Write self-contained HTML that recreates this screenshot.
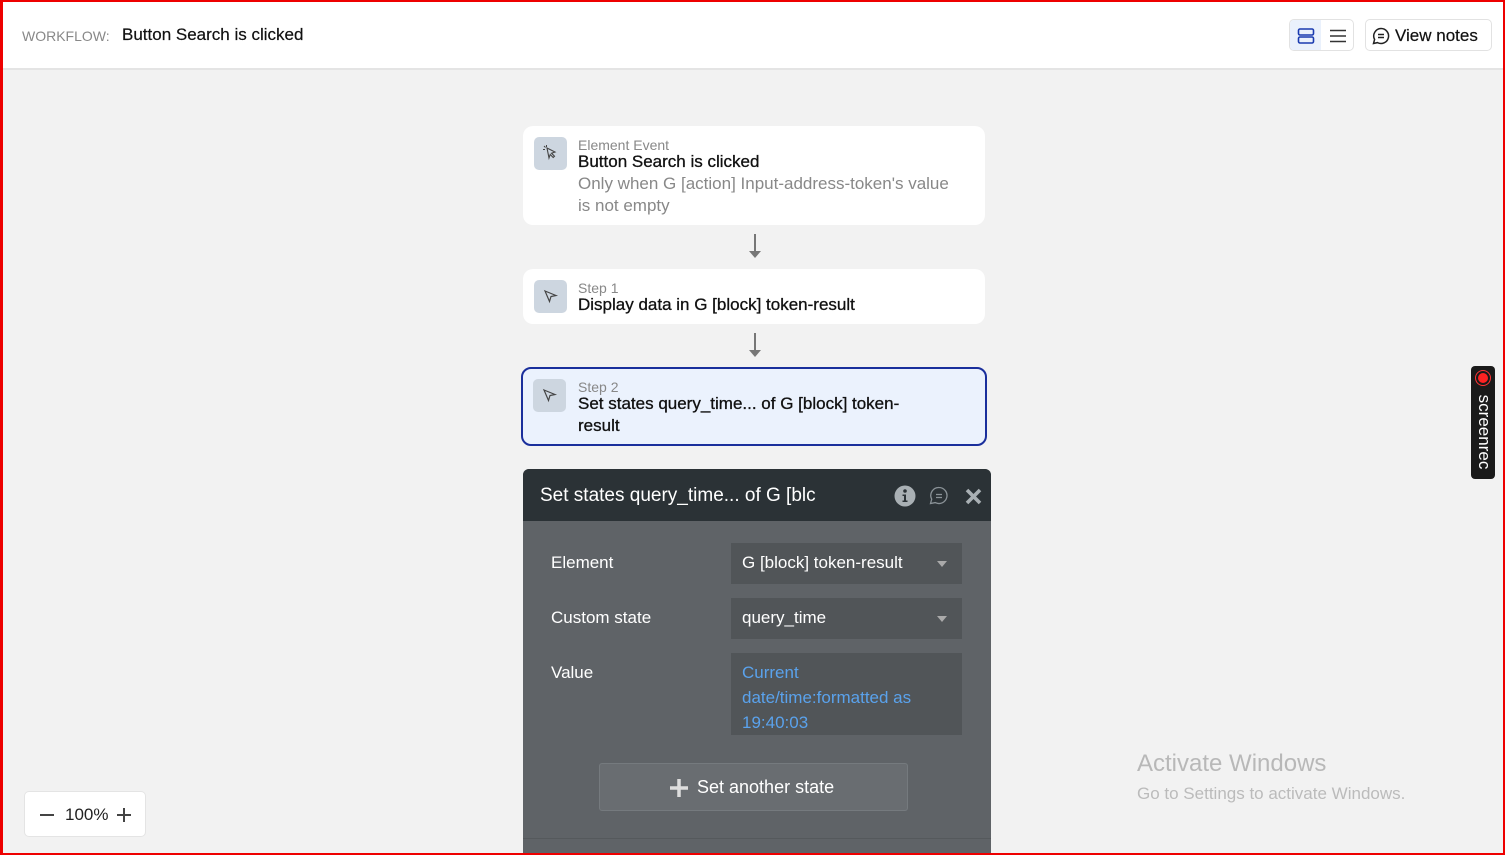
<!DOCTYPE html>
<html><head><meta charset="utf-8"><style>
*{box-sizing:border-box;margin:0;padding:0}
html,body{width:1505px;height:855px;overflow:hidden}
body{background:#f2f2f2;font-family:"Liberation Sans",sans-serif;position:relative}
.frame{position:absolute;left:0;top:0;width:1505px;height:855px;border:2px solid #e00;border-left-width:3px;pointer-events:none;z-index:10}
.hdr{position:absolute;left:0;top:0;width:1505px;height:70px;background:#fff;border-bottom:2px solid #e4e4e4}
.abs{position:absolute}
.card{position:absolute;left:523px;width:462px;background:#fff;border-radius:10px}
.ic{position:absolute;left:11px;top:11px;width:33px;height:33px;background:#cdd6e0;border-radius:5px}
.lbl{position:absolute;left:55px;font-size:14px;color:#888}
.ttl{position:absolute;left:55px;font-size:17px;color:#111;line-height:22px;-webkit-text-stroke:0.3px #111}
.arrow{position:absolute;left:754px;width:2px;background:#777}
.panel{position:absolute;left:523px;top:469px;width:468px;height:386px;background:#5f6367;border-radius:6px 6px 0 0;overflow:hidden}
.ph{height:52px;background:#2b3236;color:#fff;font-size:19px;padding:16px 0 0 17px}
.row{position:absolute;left:28px;color:#fff;font-size:17px}
.sel{position:absolute;left:208px;width:231px;height:41px;background:#515558;color:#fff;font-size:17px;padding:10px 0 0 11px}
.tri{position:absolute;right:15px;top:18px;border:5px solid transparent;border-top:6px solid #aaa;border-bottom:0}
</style></head><body>
<div class="hdr">
 <div class="abs" style="left:22px;top:28px;font-size:14px;color:#888">WORKFLOW:</div>
 <div class="abs" style="left:122px;top:25px;font-size:17px;color:#111;-webkit-text-stroke:0.2px #111">Button Search is clicked</div>
 <div class="abs" style="left:1289px;top:19px;width:65px;height:32px;border:1px solid #e2e2e2;border-radius:5px;overflow:hidden">
  <div class="abs" style="left:0;top:0;width:31px;height:32px;background:#eaf1fc"></div>
  <svg class="abs" style="left:7px;top:8px" width="18" height="16"><rect x="1.5" y="1" width="15" height="6" rx="1.5" fill="none" stroke="#1a3bb0" stroke-width="1.6"/><rect x="1.5" y="9" width="15" height="6" rx="1.5" fill="none" stroke="#1a3bb0" stroke-width="1.6"/></svg>
  <svg class="abs" style="left:39px;top:9px" width="18" height="14"><path d="M1 1.5H17M1 7H17M1 12.5H17" stroke="#333" stroke-width="1.6"/></svg>
 </div>
 <div class="abs" style="left:1365px;top:19px;width:127px;height:32px;border:1px solid #e2e2e2;border-radius:5px">
  <svg class="abs" style="left:6px;top:7px" width="18" height="18"><path d="M9 1.5a7.5 7.5 0 1 1-3.5 14.1L1.5 16.5 2.6 12.5A7.5 7.5 0 0 1 9 1.5z" fill="none" stroke="#222" stroke-width="1.5"/><path d="M6 7.5h6M6 10.5h6" stroke="#222" stroke-width="1.4"/></svg>
  <div class="abs" style="left:29px;top:6px;font-size:17px;color:#111;-webkit-text-stroke:0.2px #111">View notes</div>
 </div>
</div>

<div class="card" style="top:126px;height:99px">
 <div class="ic"><svg width="33" height="33"><path d="M13 11l8 4-3.5 1.2 3 3-1.3 1.3-3-3L15 21z" fill="none" stroke="#444" stroke-width="1.1"/><path d="M10 9l1.5 1.5M9 12.5h2M12.5 8v2" stroke="#444" stroke-width="1"/></svg></div>
 <div class="lbl" style="top:11px">Element Event</div>
 <div class="ttl" style="top:25px">Button Search is clicked</div>
 <div class="ttl" style="top:47px;color:#888;width:385px;-webkit-text-stroke:0">Only when G [action] Input-address-token's value is not empty</div>
</div>
<div class="arrow" style="top:234px;height:22px"></div>
<svg class="abs" style="left:748px;top:250px" width="14" height="10"><path d="M1 1l6 7 6-7z" fill="#777"/></svg>

<div class="card" style="top:269px;height:55px">
 <div class="ic"><svg width="33" height="33"><path d="M11 11l11 4.5-5 1-1.5 5z" fill="none" stroke="#444" stroke-width="1.2"/></svg></div>
 <div class="lbl" style="top:11px">Step 1</div>
 <div class="ttl" style="top:25px">Display data in G [block] token-result</div>
</div>
<div class="arrow" style="top:333px;height:22px"></div>
<svg class="abs" style="left:748px;top:349px" width="14" height="10"><path d="M1 1l6 7 6-7z" fill="#777"/></svg>

<div class="card" style="top:367px;height:79px;left:521px;width:466px;background:#ebf2fd;border:2px solid #1a2f9c">
 <div class="ic" style="left:10px;top:10px"><svg width="33" height="33"><path d="M11 11l11 4.5-5 1-1.5 5z" fill="none" stroke="#444" stroke-width="1.2"/></svg></div>
 <div class="lbl" style="top:10px;left:55px">Step 2</div>
 <div class="ttl" style="top:24px;left:55px;width:360px">Set states query_time... of G [block] token-result</div>
</div>

<div class="panel">
 <div class="ph">Set states query_time... of G [blc</div>
 <svg class="abs" style="left:371px;top:16px" width="22" height="22"><circle cx="11" cy="11" r="10.5" fill="#a9b0b4"/><circle cx="11" cy="6" r="1.8" fill="#2b3236"/><path d="M8.5 9.5h3.5v6h1.5v1.5h-5v-1.5h1.5v-4.5h-1.5z" fill="#2b3236"/></svg>
 <svg class="abs" style="left:406px;top:17px" width="20" height="20"><path d="M10 1.5a8 8 0 1 1-3.7 15.1L1.5 17.5 2.7 13.2A8 8 0 0 1 10 1.5z" fill="none" stroke="#8a9297" stroke-width="1.3"/><path d="M7 8.5h6M7 11.5h6" stroke="#8a9297" stroke-width="1.3"/></svg>
 <svg class="abs" style="left:442px;top:19px" width="17" height="17"><path d="M2 2L15 15M15 2L2 15" stroke="#a9b0b4" stroke-width="3.6"/></svg>
 <div class="row" style="top:84px">Element</div>
 <div class="sel" style="top:74px">G [block] token-result<div class="tri"></div></div>
 <div class="row" style="top:139px">Custom state</div>
 <div class="sel" style="top:129px">query_time<div class="tri"></div></div>
 <div class="row" style="top:194px">Value</div>
 <div class="sel" style="top:184px;height:82px;color:#5aa2ec;line-height:25px;padding-top:7px;width:231px">Current<br>date/time:formatted as<br>19:40:03</div>
 <div class="abs" style="left:76px;top:294px;width:309px;height:48px;background:#696d71;border:1px solid #757a7e;border-radius:3px;color:#fff;font-size:18px">
  <svg class="abs" style="left:69px;top:14px" width="20" height="20"><path d="M10 1v18M1 10h18" stroke="#ddd" stroke-width="3.5"/></svg>
  <div class="abs" style="left:97px;top:13px">Set another state</div>
 </div>
 <div class="abs" style="left:0;top:369px;width:468px;height:1px;background:#55595c"></div>
</div>

<div class="abs" style="left:1471px;top:366px;width:24px;height:113px;background:#1a1a1a;border-radius:4px">
 <div class="abs" style="left:4px;top:4px;width:16px;height:16px;border-radius:50%;border:1.5px solid #f33"></div>
 <div class="abs" style="left:7px;top:7px;width:10px;height:10px;border-radius:50%;background:#f22"></div>
 <div class="abs" style="left:1px;top:22px;width:88px;height:22px;transform-origin:0 0;transform:translate(23px,0) rotate(90deg);color:#fff;font-size:17px;line-height:22px;text-align:center">screenrec</div>
</div>

<div class="abs" style="left:1137px;top:750px;font-size:24px;color:#b8b8b8">Activate Windows</div>
<div class="abs" style="left:1137px;top:784px;font-size:17px;color:#bbb">Go to Settings to activate Windows.</div>

<div class="abs" style="left:24px;top:791px;width:122px;height:46px;background:#fff;border:1px solid #e4e4e4;border-radius:5px">
 <div class="abs" style="left:15px;top:22px;width:14px;height:1.6px;background:#444"></div>
 <div class="abs" style="left:40px;top:13px;font-size:17px;color:#222">100%</div>
 <div class="abs" style="left:92px;top:22px;width:14px;height:1.6px;background:#444"></div>
 <div class="abs" style="left:98.2px;top:15.5px;width:1.6px;height:14px;background:#444"></div>
</div>
<div class="frame"></div>
</body></html>
